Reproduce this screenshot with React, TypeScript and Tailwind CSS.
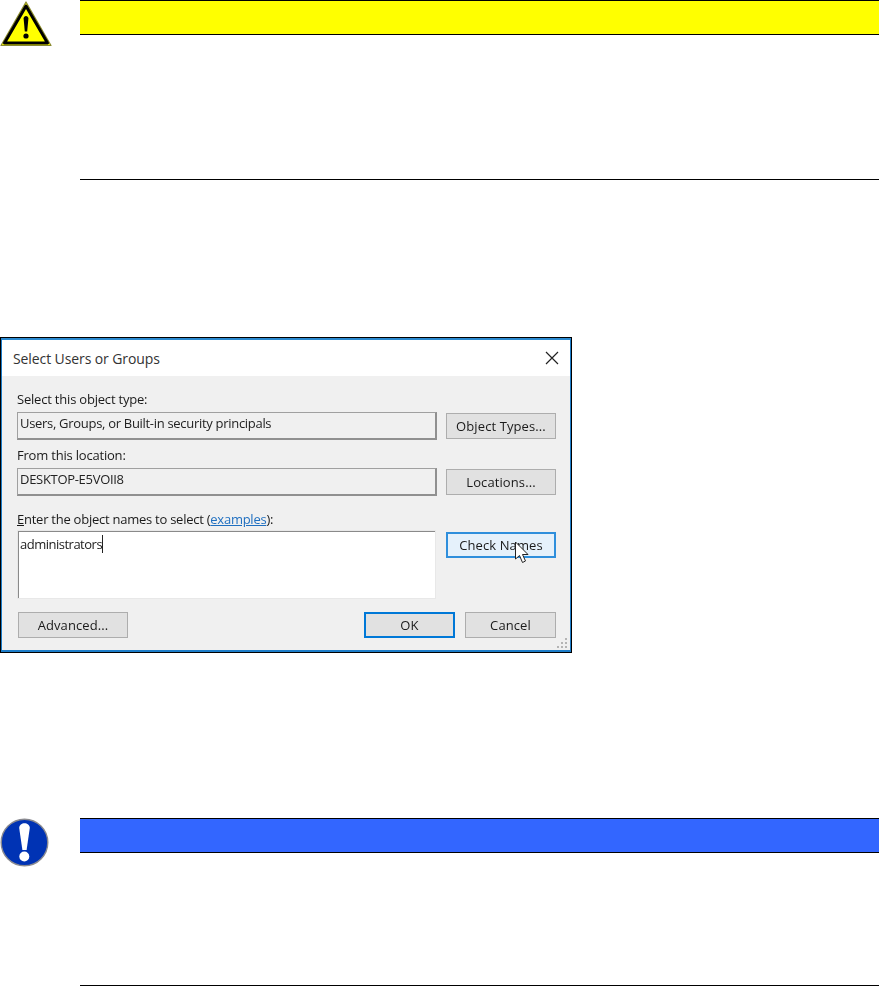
import React from 'react';

const font = "[font-family:'Open_Sans',sans-serif]";

const Button: React.FC<{ label: string; className?: string }> = ({ label, className = '' }) => (
  <div className={`h-[26px] flex items-center justify-center pt-[1px] bg-[#e1e1e1] border border-[#adadad] text-[13px] tracking-[0.1px] text-[#1a1a1a] ${className}`}>{label}</div>
);

const ReadonlyRow: React.FC<{ label: string; value: string; button: string; className?: string }> = ({ label, value, button, className = '' }) => (
  <div className={className}>
    <p className="text-[13px] leading-[16px] tracking-[-0.2px] text-[#1a1a1a] h-[16px]">{label}</p>
    <div className="flex mt-[5px] items-center gap-[9px]">
      <div className="w-[420px] h-[28px] flex items-center pl-[2px] pb-[4px] border border-[#a0a0a0] border-b-2 border-r-2 border-b-[#909090] border-r-[#909090] text-[13px] tracking-[-0.3px] text-[#222]">{value}</div>
      <Button label={button} className="w-[110px]" />
    </div>
  </div>
);

const WarningIcon = () => (
  <svg width="52" height="47" viewBox="0 0 52 47">
    <path d="M26 2 L51 45.5 L1 45.5 Z" fill="#ffff00" stroke="#8a8a30" strokeWidth="1.2" strokeLinejoin="round" />
    <path d="M26 6 L47.5 43 L4.5 43 Z" fill="#ffff00" stroke="#000" strokeWidth="3" strokeLinejoin="round" />
    <path d="M23.6 18.5 C23.6 15 28.4 15 28.4 18.5 L27.2 31.5 L24.8 31.5 Z" fill="#000" />
    <circle cx="26" cy="36" r="2.6" fill="#000" />
  </svg>
);

const NoticeIcon = () => (
  <svg width="49" height="49" viewBox="0 0 49 49">
    <circle cx="24.5" cy="24.5" r="23.3" fill="#0033b4" stroke="#8a8a90" strokeWidth="1.4" />
    <path d="M19.2 10 C19.2 3.5 29.8 3.5 29.8 10 L26.6 32 L22.4 32 Z" fill="#fff" />
    <circle cx="24.3" cy="38.5" r="5" fill="#fff" />
  </svg>
);

const Banner: React.FC<{ icon: React.ReactNode; bg: string; height: string }> = ({ icon, bg, height }) => (
  <section className={`flex ${height}`}>
    <div className="w-[80px] shrink-0">{icon}</div>
    <div className="flex-1 flex flex-col">
      <div className={`h-[35px] border-y border-black ${bg}`} />
      <div className="flex-1 border-b border-black" />
    </div>
  </section>
);

const Dialog = () => (
  <div className={`relative w-[572px] h-[316px] border-[1.5px] border-black bg-[#f0f0f0] ${font}`}>
    <div className="h-full border-t-2 border-b-2 border-x border-t-[#2b8ad0] border-b-[#1c7cc8] border-x-[#1c7cc8] blur-[0.3px]">
      <div className="h-[36px] bg-white flex items-center justify-between pl-[11px] pr-[11px]">
        <span className="text-[14px] tracking-[-0.1px] text-[#333]">Select Users or Groups</span>
        <svg width="14" height="14" viewBox="0 0 14 14">
          <path d="M1 1 L13 13 M13 1 L1 13" stroke="#222" strokeWidth="1.2" fill="none" />
        </svg>
      </div>
      <div className="pl-[15px] pr-[13px] pt-[15px]">
        <ReadonlyRow label="Select this object type:" value="Users, Groups, or Built-in security principals" button="Object Types..." />
        <ReadonlyRow label="From this location:" value="DESKTOP-E5VOII8" button="Locations..." className="mt-[7px]" />
        <p className="mt-[15px] h-[16px] text-[13px] leading-[16px] tracking-[-0.25px] text-[#1a1a1a]">
          <span className="underline">E</span>nter the object names to select (<span className="text-[#1f6fc0] underline">examples</span>):
        </p>
        <div className="flex mt-[3px] gap-[10px]">
          <div className="w-[419px] h-[69px] bg-white border-t-2 border-l-2 border-[#8a8a8a] outline outline-[#e8e8e8] -outline-offset-1 pl-[1px] pt-[3px] text-[13px] leading-[18px] tracking-[-0.5px] text-[#222]">
            <span className="border-r border-[#222]">administrators</span>
          </div>
          <Button label="Check Names" className="w-[110px] mt-[2px] !bg-[#e5f1fb] !border-[#2f8fdc] border-2" />
        </div>
        <div className="flex mt-[13px] gap-[10px] ml-[1px]">
          <Button label="Advanced..." className="w-[110px] mr-[226px]" />
          <Button label="OK" className="w-[91px] !border-[#0078d7] border-2" />
          <Button label="Cancel" className="w-[91px]" />
        </div>
      </div>
    </div>
    <svg className="absolute left-[513px] top-[203px]" width="18" height="24" viewBox="0 0 18 24">
      <path d="M1.5 1 L1.5 18 L5.5 14.5 L8.5 21.5 L11.5 20 L8.5 13.5 L14 13.5 Z" fill="#fff" stroke="#222" strokeWidth="1" strokeLinejoin="round" />
    </svg>
    <svg className="absolute right-[3px] bottom-[3px]" width="11" height="11" viewBox="0 0 11 11">
      <path d="M8 0h2v2H8zM4 4h2v2H4zM8 4h2v2H8zM0 8h2v2H0zM4 8h2v2H4zM8 8h2v2H8z" fill="#b4b4b4" />
    </svg>
  </div>
);

export default function App() {
  return (
    <div className="w-[879px] h-[986px] bg-white overflow-hidden">
      <Banner icon={<WarningIcon />} bg="bg-[#ffff00]" height="h-[180px]" />
      <div className="mt-[157px]">
        <Dialog />
      </div>
      <div className="mt-[165px]">
        <Banner icon={<NoticeIcon />} bg="bg-[#3366ff]" height="h-[168px]" />
      </div>
    </div>
  );
}
